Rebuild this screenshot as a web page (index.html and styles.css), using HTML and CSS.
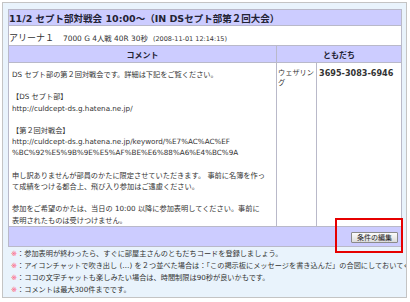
FILE: index.html
```html
<!DOCTYPE html>
<html lang="ja">
<head>
<meta charset="utf-8">
<link rel="stylesheet" href="styles.css">
</head>
<body>
<div class="panel">
  <table class="board">
    <colgroup><col class="c-comment"><col class="c-name"><col class="c-code"></colgroup>
    <tr class="r-title"><th colspan="3" class="title">11/2 セプト部対戦会 10:00～（IN DSセプト部第２回大会）</th></tr>
    <tr class="r-info"><td colspan="3" class="info"><span class="arena">アリーナ１</span><span class="rule">7000 G 4人戦 40R 30秒</span> <span class="date">(2008-11-01 12:14:15)</span></td></tr>
    <tr class="r-head"><th class="head">コメント</th><th colspan="2" class="head">ともだち</th></tr>
    <tr class="r-body">
      <td class="comment">DS セプト部の第２回対戦会です。詳細は下記をご覧ください。<br><br>【DS セプト部】<br>http://culdcept-ds.g.hatena.ne.jp/<br><br>【第２回対戦会】<br>http://culdcept-ds.g.hatena.ne.jp/keyword/%E7%AC%AC%EF<br>%BC%92%E5%9B%9E%E5%AF%BE%E6%88%A6%E4%BC%9A<br><br>申し訳ありませんが部員のかたに限定させていただきます。 事前に名簿を作っ<br>て成績をつける都合上、飛び入り参加はご遠慮ください。<br><br>参加をご希望のかたは、当日の 10:00 以降に参加表明してください。事前に<br>表明されたものは受けつけません。</td>
      <td class="name">ウェザリング</td>
      <td class="code">3695-3083-6946</td>
    </tr>
    <tr class="r-foot"><td colspan="3" class="foot"><button class="edit" type="button">条件の編集</button></td></tr>
  </table>
  <ul class="notes">
    <li><span class="kome">※</span>：参加表明が終わったら、すぐに部屋主さんのともだちコードを登録しましょう。</li>
    <li><span class="kome">※</span>：アイコンチャットで吹き出し (…) を２つ並べた場合は：「この掲示板にメッセージを書き込んだ」の合図にしておいてください。</li>
    <li><span class="kome">※</span>：ココの文字チャットも楽しみたい場合は、時間制限は90秒が良いかもです。</li>
    <li><span class="kome">※</span>：コメントは最大300件までです。</li>
  </ul>
</div>
<div class="mark"></div>
</body>
</html>
```

FILE: styles.css
```css
html, body {
  margin: 0;
  padding: 0;
  background: #ffffff;
}
body {
  position: relative;
  width: 410px;
  height: 302px;
  overflow: hidden;
  font-family: "DejaVu Sans", "Noto Sans CJK JP", sans-serif;
  color: #333333;
}
.panel {
  box-sizing: border-box;
  margin: 2px 0 0 2px;
  width: 405px;
  height: 296px;
  border: 1px solid #c4c4c4;
  background: #e9f3fc;
  padding: 6px 5px 0 5px;
  overflow: hidden;
}
.board {
  border-collapse: collapse;
  table-layout: fixed;
  width: 393px;
  background: #ffffff;
}
.c-comment { width: 268px; }
.c-name { width: 40px; }
.c-code { width: 85px; }
.board th, .board td {
  border: 1px solid #b9b9c9;
  padding: 0;
}
.title {
  background: #ccccff;
  height: 15px;
  text-align: left;
  padding-left: 2px;
  font-size: 9.5px;
  font-weight: bold;
  color: #222233;
  white-space: nowrap;
}
.info {
  height: 15px;
  padding-left: 2px;
  white-space: nowrap;
  color: #333333;
}
.arena {
  font-size: 9px;
  margin-right: 9px;
}
.rule {
  font-size: 7.4px;
}
.date {
  font-size: 6.5px;
}
.head {
  background: #ccccff;
  height: 16px;
  font-size: 8px;
  font-weight: bold;
  text-align: center;
  color: #222233;
}
.comment {
  vertical-align: top;
  padding: 6px 3px 0 3px !important;
  font-size: 7.2px;
  line-height: 11.2px;
  white-space: nowrap;
}
.name {
  vertical-align: top;
  padding: 5px 1px 0 1px !important;
  font-size: 7.2px;
  line-height: 10px;
}
.code {
  vertical-align: top;
  padding: 5px 1px 0 2px !important;
  font-size: 8.1px;
  line-height: 10px;
  font-weight: bold;
  white-space: nowrap;
}
.foot {
  background: #ccccff;
  height: 17px;
  text-align: right;
  padding-right: 3px !important;
}
.edit {
  font-family: "Noto Sans CJK JP", sans-serif;
  font-size: 7px;
  line-height: 9px;
  height: 11px;
  padding: 0 5px;
  margin: 0;
  border: 1px solid #8a8a8a;
  border-radius: 1px;
  background: linear-gradient(#fbfbfb, #dcdcdc);
  color: #222222;
  vertical-align: middle;
}
.notes {
  list-style: none;
  margin: 1px 0 0 0;
  padding: 0 0 0 3px;
  font-size: 7.2px;
  line-height: 12.2px;
  white-space: nowrap;
}
.kome {
  color: #ff5a7a;
}
.mark {
  position: absolute;
  left: 335px;
  top: 218px;
  width: 64px;
  height: 31px;
  border: 2px solid #e60000;
}
```
